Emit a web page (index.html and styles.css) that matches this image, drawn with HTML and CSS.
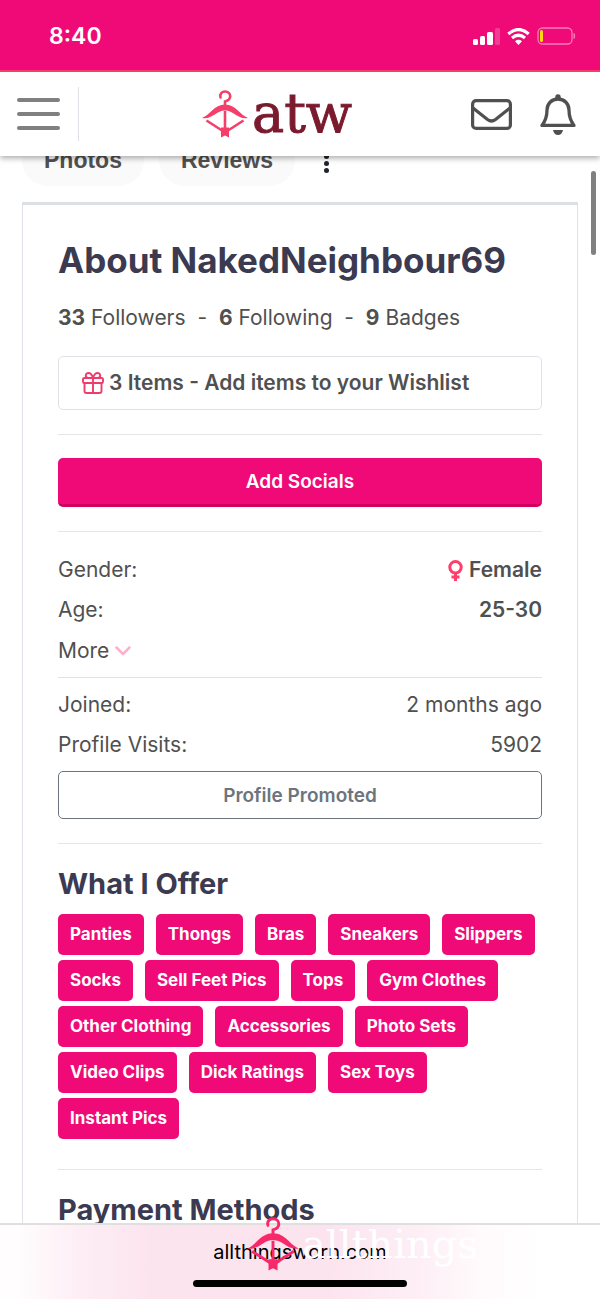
FILE: index.html
```html
<!DOCTYPE html>
<html lang="en">

<head>
    <meta charset="UTF-8">
    <meta name="viewport" content="width=device-width, initial-scale=1.0">
    <title>About NakedNeighbour69</title>
    <link rel="stylesheet" href="styles.css">
</head>

<body>
    <svg width="0" height="0" class="defs" aria-hidden="true">
        <symbol id="hanger" viewBox="0 0 46 48">
            <path d="M18.500 7.500C17.500 3.800 20 1.500 23 1.500c3.200 0 5.200 2.200 5.200 4.800 0 3.200-2.200 4.400-5.200 5.200V16" fill="none" stroke="currentColor" stroke-width="2.600" stroke-linecap="round"/>
            <path d="M0 28C8 25 12 14.500 23 14.500S38 25 46 28c-10 2-14-7.500-23-7.500S10 30 0 28z" fill="currentColor"/>
            <path d="M4.500 30.500 20 40.500M41.500 30.500 26 40.500M23 21v19" fill="none" stroke="currentColor" stroke-width="2.600"/>
            <path d="M19 37.500h8V47.500L23 45.500l-4 2z" fill="currentColor"/>
        </symbol>
    </svg>

    <div class="status">
        <span class="time">8:40</span>
        <div class="status-icons">
            <svg width="27" height="17" viewBox="0 0 27 17" fill="#fff">
                <rect x="0" y="11" width="5" height="6" rx="1.500"/>
                <rect x="7" y="8" width="5" height="9" rx="1.500"/>
                <rect x="14" y="4" width="6" height="13" rx="1.500"/>
                <rect x="22" y="0" width="5" height="17" rx="1.500" opacity=".2"/>
            </svg>
            <svg width="23" height="17" viewBox="0 0 23 17">
                <path d="M1.300 6Q11.500-3 21.700 6M5 10Q11.500 4.500 18 10" fill="none" stroke="#fff" stroke-width="3.200"/>
                <path d="M11.500 17 8 13.200q3.500-2.800 7 0z" fill="#fff"/>
            </svg>
            <svg width="39" height="18" viewBox="0 0 39 18">
                <rect x="1" y="1" width="34" height="16" rx="4.500" fill="none" stroke="#f77db8" stroke-width="1.300"/>
                <rect x="3" y="3" width="3" height="12" rx="1.500" fill="#ffd60a"/>
                <path d="M37 6.500q1.500 2.500 0 5z" fill="#f77db8" stroke="#f77db8"/>
            </svg>
        </div>
    </div>

    <header class="header">
        <button class="menu" aria-label="Menu"><i></i><i></i><i></i></button>
        <a href="#" class="logo">
            <svg class="logo-mark"><use href="#hanger"/></svg>
            <span>atw</span>
        </a>
        <button class="icon-btn" aria-label="Messages">
            <svg width="41" height="31" viewBox="0 0 41 31" fill="none" stroke="#505050" stroke-width="3.200">
                <rect x="1.600" y="1.600" width="37.800" height="27.800" rx="3.500"/>
                <path d="M2 9l14.500 11.500q4 3 8 0L39 9"/>
            </svg>
        </button>
        <button class="icon-btn" aria-label="Notifications">
            <svg width="36" height="41" viewBox="0 0 36 41">
                <path d="M18 5C11.500 5 7 10 7 16c0 8-2 11.500-5 15.400h32C31 27.500 29 24 29 16 29 10 24.500 5 18 5z" fill="none" stroke="#505050" stroke-width="3.300" stroke-linejoin="round"/>
                <path d="M15.300 5V3a2.700 2.700 0 0 1 5.400 0v2zM13 36h10q-1 5-5 5t-5-5z" fill="#505050"/>
            </svg>
        </button>
    </header>

    <main class="page">
        <nav class="tabs">
            <a href="#" class="tab">Photos</a>
            <a href="#" class="tab">Reviews</a>
            <button class="dots" aria-label="More tabs"><i></i><i></i><i></i></button>
        </nav>

        <section class="card">
            <h1>About NakedNeighbour69</h1>
            <p class="stats"><b>33</b> Followers &nbsp;-&nbsp; <b>6</b> Following &nbsp;-&nbsp; <b>9</b> Badges</p>
            <a href="#" class="wishlist">
                <svg width="22" height="22" viewBox="0 0 22 22" fill="none" stroke="#ee3d6b" stroke-width="1.900">
                    <rect x="1" y="6" width="20" height="5" rx="1.300"/>
                    <path d="M2.500 11v8q0 2 2 2h13q2 0 2-2v-8M11 6v15M11 6H6Q3.500 5.500 3.800 3.200 4.300 1 6.500 1 9.500 1 11 6q1.500-5 4.500-5 2.200 0 2.700 2.200Q18.500 5.500 16 6"/>
                </svg>
                3 Items - Add items to your Wishlist
            </a>
            <hr>
            <button class="btn">Add Socials</button>
            <hr>
            <dl class="info">
                <div class="row">
                    <dt>Gender:</dt>
                    <dd class="strong">
                        <svg width="15" height="21" viewBox="0 0 15 21" fill="none" stroke="#ff3d6b" stroke-width="3">
                            <circle cx="7.500" cy="7.300" r="5.700"/>
                            <path d="M7.500 13v8M3.500 17h8"/>
                        </svg>
                        Female
                    </dd>
                </div>
                <div class="row">
                    <dt>Age:</dt>
                    <dd class="strong">25-30</dd>
                </div>
            </dl>
            <button class="more">More
                <svg width="16" height="10" viewBox="0 0 16 10" fill="none" stroke="#ffb0c8" stroke-width="2.500" stroke-linecap="round" stroke-linejoin="round">
                    <path d="M1.500 1.500 8 8l6.500-6.500"/>
                </svg>
            </button>
            <dl class="info joined">
                <div class="row">
                    <dt>Joined:</dt>
                    <dd>2 months ago</dd>
                </div>
                <div class="row">
                    <dt>Profile Visits:</dt>
                    <dd>5902</dd>
                </div>
            </dl>
            <button class="btn btn-outline">Profile Promoted</button>
            <hr>
            <h2>What I Offer</h2>
            <div class="tags">
                <a href="#">Panties</a>
                <a href="#">Thongs</a>
                <a href="#">Bras</a>
                <a href="#">Sneakers</a>
                <a href="#">Slippers</a>
                <a href="#">Socks</a>
                <a href="#">Sell Feet Pics</a>
                <a href="#">Tops</a>
                <a href="#">Gym Clothes</a>
                <a href="#">Other Clothing</a>
                <a href="#">Accessories</a>
                <a href="#">Photo Sets</a>
                <a href="#">Video Clips</a>
                <a href="#">Dick Ratings</a>
                <a href="#">Sex Toys</a>
                <a href="#">Instant Pics</a>
            </div>
            <hr>
            <h2>Payment Methods</h2>
        </section>
        <div class="scroll-thumb"></div>
    </main>

    <footer class="browser-bar">
        <span class="url">allthingsworn.com</span>
        <div class="home"></div>
        <div class="watermark">
            <svg class="watermark-mark"><use href="#hanger"/></svg>
            <span>allthings</span>
        </div>
    </footer>
</body>

</html>
```

FILE: styles.css
```css
* {
    box-sizing: border-box;
}

body {
    margin: 0;
    height: 100vh;
    display: flex;
    flex-direction: column;
    overflow: hidden;
    background: #fff;
    color: #505050;
    font-family: Inter, "Liberation Sans", sans-serif;
    font-size: 21px;
    line-height: 30px;
}

a {
    color: inherit;
    text-decoration: none;
}

button {
    padding: 0;
    border: none;
    background: none;
    color: inherit;
    font: inherit;
    cursor: pointer;
}

.defs {
    position: absolute;
}

/* phone status bar */
.status {
    flex: none;
    display: flex;
    justify-content: space-between;
    align-items: center;
    height: 72px;
    padding: 2px 24px 0 49px;
    background: #ef0a78;
    border-bottom: 2px solid #f43f6b;
}

.time {
    color: #fff;
    font-size: 23px;
    font-weight: 600;
}

.status-icons {
    display: flex;
    align-items: center;
    gap: 7px;
}

/* top navigation */
.header {
    flex: none;
    position: relative;
    z-index: 2;
    display: flex;
    align-items: center;
    height: 84px;
    padding: 0 24px 0 17px;
    background: #fff;
    box-shadow: 0 2px 6px rgba(0, 0, 0, 0.35);
    clip-path: inset(0 0 -12px);
}

.menu {
    display: flex;
    flex-direction: column;
    align-items: flex-start;
    justify-content: center;
    gap: 10px;
    width: 62px;
    height: 54px;
    border-right: 1px solid #dee2e6;
}

.menu i {
    width: 43px;
    height: 4px;
    border-radius: 2px;
    background: #808080;
}

.logo {
    display: flex;
    align-items: center;
    gap: 4px;
    margin: 0 auto;
    padding-left: 4px;
    color: #7b1a2e;
    font-family: "DejaVu Serif", serif;
    font-size: 54px;
    line-height: 62px;
    -webkit-text-stroke: 1px #7b1a2e;
}

.logo-mark {
    width: 46px;
    height: 48px;
    color: #f43f6b;
}

.icon-btn {
    display: flex;
}

.icon-btn + .icon-btn {
    margin-left: 28px;
}

/* scrolled page */
.page {
    flex: 1;
    min-height: 0;
    position: relative;
    overflow: hidden;
    padding: 0 22px;
}

.tabs {
    display: flex;
    align-items: center;
    gap: 15px;
    margin-top: -22px;
    margin-bottom: 16px;
}

.tab {
    padding: 0 22px;
    border-radius: 26px;
    background: #fafafa;
    font-family: "Liberation Sans", sans-serif;
    font-size: 23px;
    font-weight: bold;
    line-height: 52px;
}

.dots {
    display: flex;
    flex-direction: column;
    gap: 2px;
    padding: 7px 14px 0;
}

.dots i {
    width: 5px;
    height: 5px;
    border-radius: 50%;
    background: #212529;
}

.card {
    padding: 33px 35px;
    border: 1px solid #dee2e6;
    border-top: 3px solid #dcdfe3;
}

h1,
h2 {
    margin: 0;
    color: #3b3a50;
    font-weight: 700;
}

h1 {
    font-size: 35px;
    line-height: 44px;
}

h2 {
    font-size: 29px;
    line-height: 34px;
}

.stats {
    margin: 21px 0 23px;
}

.wishlist {
    display: flex;
    align-items: center;
    gap: 5px;
    height: 54px;
    padding: 0 23px;
    border: 1px solid #dee2e6;
    border-radius: 5px;
    font-weight: 600;
}

hr {
    height: 1px;
    margin: 24px 0 23px;
    border: none;
    background: #e4e6ea;
}

.btn {
    display: block;
    width: 100%;
    height: 49px;
    padding-top: 1px;
    border-bottom: 3px solid #d1005d;
    border-radius: 5px;
    background: #ef0a78;
    color: #fff;
    font-size: 19px;
    font-weight: 600;
}

.btn-outline {
    height: 48px;
    border: 1px solid #6c757d;
    background: #fff;
    color: #6c757d;
}

.info {
    display: flex;
    flex-direction: column;
    gap: 10px;
    margin: 0;
}

.row {
    display: flex;
    justify-content: space-between;
}

.row dd {
    display: flex;
    align-items: center;
    gap: 6px;
    margin: 0;
}

.strong {
    font-weight: 600;
}

.more {
    display: flex;
    align-items: center;
    gap: 6px;
    margin: 11px 0;
}

.joined {
    padding: 12px 0 11px;
    border-top: 1px solid #dee2e6;
}

.tags {
    display: flex;
    flex-wrap: wrap;
    gap: 5px 12px;
    margin: 13px 0 30px;
}

.tags a {
    padding: 0 12px;
    border-radius: 5px;
    background: #ef0a78;
    color: #fff;
    font-size: 17px;
    font-weight: 700;
    line-height: 41px;
}

.scroll-thumb {
    position: absolute;
    top: 15px;
    right: 4px;
    width: 5px;
    height: 84px;
    border-radius: 3px;
    background: #808080;
}

/* browser address bar */
.browser-bar {
    flex: none;
    position: relative;
    display: flex;
    flex-direction: column;
    align-items: center;
    justify-content: space-between;
    height: 76px;
    padding: 13px 0 12px;
    border-top: 2px solid #dfdfdf;
    background: linear-gradient(90deg, #fffdfe 3%, #fdedf4 14%, #fce4ef 25%, #fce4ef 55%, #fdeff5 70%, #fffafc 80%, #fff 90%);
}

.url {
    color: #000;
    font-size: 20px;
    line-height: 28px;
}

.home {
    width: 214px;
    height: 7px;
    border-radius: 4px;
    background: #000;
}

.watermark {
    position: absolute;
    top: -8px;
    left: 50%;
    margin-left: -53px;
    display: flex;
    align-items: center;
    gap: 3px;
    color: #fff;
    font-family: "DejaVu Serif", serif;
    font-size: 40px;
    line-height: 54px;
}

.watermark-mark {
    width: 52px;
    height: 54px;
    color: #f7296b;
}
```
